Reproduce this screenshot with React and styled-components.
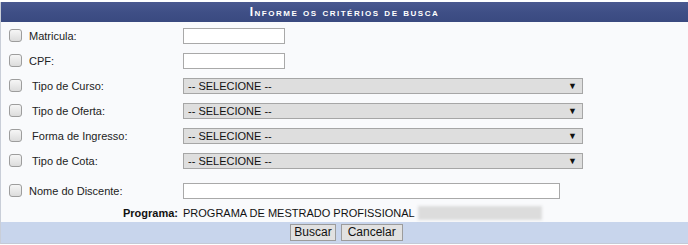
import React from "react";
import styled, { createGlobalStyle } from "styled-components";

const GlobalStyle = createGlobalStyle`
  html, body {
    margin: 0;
    padding: 0;
    background: #ffffff;
  }
  body {
    font-family: "Liberation Sans", Arial, sans-serif;
    font-size: 11px;
    color: #222;
  }
`;

const Form = styled.div`
  margin-top: 2px;
  width: 688px;
  border-left: 1px solid #c9ced8;
  border-bottom: 1px solid #c4cad6;
  box-sizing: border-box;
  background: #f9fafc;
`;

const Caption = styled.div`
  height: 20px;
  display: flex;
  align-items: center;
  justify-content: center;
  background: linear-gradient(#4a5990 0%, #3f4f86 50%, #3a4a80 100%);
  color: #fff;
  font-weight: bold;
  font-size: 12px;
  font-variant: small-caps;
  letter-spacing: 1.5px;
`;

const Body = styled.div`
  padding-top: 1px;
`;

const Row = styled.div`
  display: grid;
  grid-template-columns: 28px 154px 1fr;
  align-items: center;
  height: 25px;
  margin-top: ${(p) => p.$gap || 0}px;
`;

const Check = styled.input.attrs({ type: "checkbox" })`
  appearance: none;
  -webkit-appearance: none;
  box-sizing: border-box;
  margin: 0 0 0 8px;
  width: 13px;
  height: 13px;
  border: 1px solid #9d9d9d;
  border-radius: 3px;
  background: linear-gradient(#f6f6f6, #dcdcdc);
`;

const Label = styled.label`
  color: #222;
  white-space: nowrap;
`;

const TextField = styled.input.attrs({ type: "text" })`
  box-sizing: border-box;
  width: ${(p) => p.$w}px;
  height: 16px;
  border: 1px solid #a9a9a9;
  background: #fff;
  padding: 0 2px;
  margin: 0;
  font: 11px "Liberation Sans", Arial, sans-serif;
`;

const SelectWrap = styled.div`
  position: relative;
  width: 400px;
  height: 16px;
`;

const Select = styled.select`
  appearance: none;
  -webkit-appearance: none;
  box-sizing: border-box;
  width: 100%;
  height: 16px;
  margin: 0;
  border: 1px solid #a6a6a6;
  border-radius: 0;
  background: #dedede;
  color: #111;
  padding: 0 0 0 4px;
  font: 11px "Liberation Sans", Arial, sans-serif;
  line-height: 14px;
`;

const Arrow = styled.span`
  position: absolute;
  right: 6px;
  top: 3px;
  font-size: 9px;
  color: #111;
  pointer-events: none;
`;

const ProgramRow = styled.div`
  display: grid;
  grid-template-columns: 177px 1fr;
  column-gap: 5px;
  align-items: center;
  height: 19px;
`;

const ProgramLabel = styled.span`
  text-align: right;
  font-weight: bold;
  color: #111;
`;

const ProgramValue = styled.span`
  display: flex;
  align-items: center;
  color: #111;
  white-space: nowrap;
`;

const Redacted = styled.span`
  display: inline-block;
  width: 124px;
  height: 14px;
  margin-left: 3px;
  background: #dcdcdc;
  filter: blur(1.5px);
`;

const Footer = styled.div`
  height: 21px;
  display: flex;
  align-items: center;
  justify-content: center;
  gap: 5px;
  padding-left: 4px;
  background: #c8d5ec;
`;

const Button = styled.button`
  height: 17px;
  padding: 0 ${(p) => p.$pad || 3}px;
  margin: 0;
  border: 1px solid #9c9c9c;
  border-radius: 0;
  background: #e1e1e1;
  color: #111;
  font: 12px "Liberation Sans", Arial, sans-serif;
  line-height: 15px;
`;

const selects = ["Tipo de Curso:", "Tipo de Oferta:", "Forma de Ingresso:", "Tipo de Cota:"];

export default function App() {
  return (
    <>
      <GlobalStyle />
      <Form>
        <Caption>Informe os critérios de busca</Caption>
        <Body>
          <Row>
            <Check />
            <Label>Matricula:</Label>
            <TextField $w={102} />
          </Row>
          <Row>
            <Check />
            <Label>CPF:</Label>
            <TextField $w={102} />
          </Row>
          {selects.map((s) => (
            <Row key={s}>
              <Check />
              <Label>&nbsp;{s}</Label>
              <SelectWrap>
                <Select defaultValue="0">
                  <option value="0">-- SELECIONE --</option>
                </Select>
                <Arrow>▼</Arrow>
              </SelectWrap>
            </Row>
          ))}
          <Row $gap={5}>
            <Check />
            <Label>Nome do Discente:</Label>
            <TextField $w={377} />
          </Row>
          <ProgramRow>
            <ProgramLabel>Programa:</ProgramLabel>
            <ProgramValue>
              PROGRAMA DE MESTRADO PROFISSIONAL
              <Redacted />
            </ProgramValue>
          </ProgramRow>
        </Body>
        <Footer>
          <Button>Buscar</Button>
          <Button $pad={6}>Cancelar</Button>
        </Footer>
      </Form>
    </>
  );
}
